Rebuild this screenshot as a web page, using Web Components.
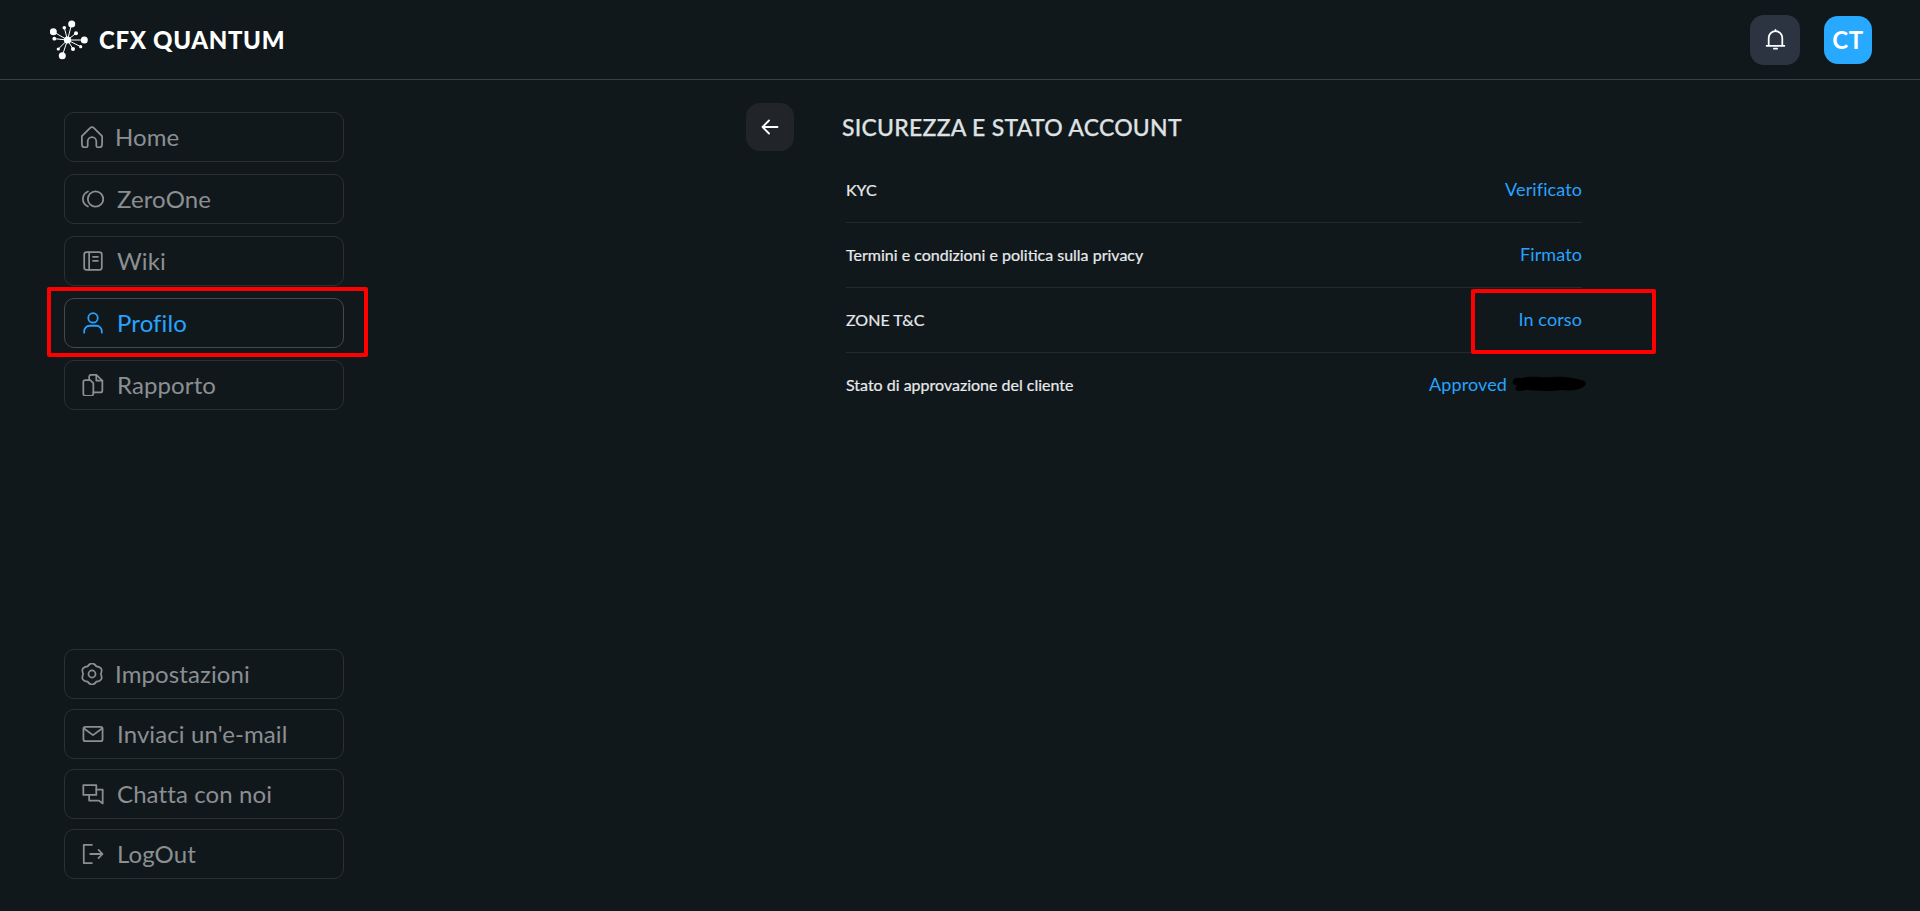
<!DOCTYPE html>
<html lang="it"><head><meta charset="utf-8"><title>CFX Quantum</title>
<style>
html,body{margin:0;height:911px;overflow:hidden;background:#11181c;font-family:"Lato","Noto Sans",sans-serif}
</style></head><body>
<cq-app>
  <cq-header slot="header"></cq-header>
  <cq-sidebar slot="side">
    <cq-nav slot="top" label="Home" icon="home"></cq-nav>
    <cq-nav slot="top" label="ZeroOne" icon="zero"></cq-nav>
    <cq-nav slot="top" label="Wiki" icon="wiki"></cq-nav>
    <cq-nav slot="top" label="Profilo" icon="user" active marked></cq-nav>
    <cq-nav slot="top" label="Rapporto" icon="report"></cq-nav>
    <cq-nav slot="bottom" label="Impostazioni" icon="gear"></cq-nav>
    <cq-nav slot="bottom" label="Inviaci un'e-mail" icon="mail"></cq-nav>
    <cq-nav slot="bottom" label="Chatta con noi" icon="chat"></cq-nav>
    <cq-nav slot="bottom" label="LogOut" icon="logout"></cq-nav>
  </cq-sidebar>
  <cq-panel slot="main" heading="SICUREZZA E STATO ACCOUNT">
    <cq-row label="KYC" value="Verificato"></cq-row>
    <cq-row label="Termini e condizioni e politica sulla privacy" value="Firmato"></cq-row>
    <cq-row label="ZONE T&amp;C" value="In corso" marked></cq-row>
    <cq-row label="Stato di approvazione del cliente" value="Approved" redacted last></cq-row>
  </cq-panel>
</cq-app>
<script>
const S='fill="none" stroke="currentColor" stroke-width="1.600" stroke-linecap="round" stroke-linejoin="round"';
const ICONS={
home:`<path d="M2.800 11.200 9.900 4.100a3 3 0 0 1 4.200 0l7.100 7.100V18.600a2.900 2.900 0 0 1-2.900 2.900h-.7a1.700 1.700 0 0 1-1.700-1.700V16a3.900 3.900 0 0 0-7.800 0v3.800a1.700 1.700 0 0 1-1.700 1.700h-.7a2.900 2.900 0 0 1-2.900-2.900z"/>`,
zero:`<circle cx="14.300" cy="12" r="7"/><path d="M7.400 5.200A7.600 7.600 0 0 0 2.800 12a7.600 7.600 0 0 0 4.600 6.800"/>`,
wiki:`<rect x="4" y="4" width="16" height="16" rx="2.200"/><path d="M8.500 4v16M12 8.200h4.500M12 11.800h4.500"/>`,
user:`<circle cx="12" cy="7.400" r="4.300"/><path d="M4 20.800v-1.300a5 5 0 0 1 5-5h6a5 5 0 0 1 5 5v1.300"/>`,
report:`<path d="M9.500 7.500H5a1.800 1.800 0 0 0-1.800 1.800V20A1.800 1.800 0 0 0 5 21.800h5.500a1.800 1.800 0 0 0 1.800-1.800V10.300z"/><path d="M8.500 7.500V4.500a1.800 1.800 0 0 1 1.800-1.800H15l5.500 5.300V17a1.800 1.800 0 0 1-1.800 1.800h-6.400"/><path d="M15 2.700V8h5.500"/>`,
gear:`<path d="M8 5.070Q12-.4 16 5.070 22.740 5.800 20 12 22.740 18.200 16 18.930 12 24.400 8 18.930 1.260 18.200 4 12 1.260 5.800 8 5.070z"/><circle cx="12" cy="12" r="3.200"/>`,
mail:`<rect x="3.300" y="5.500" width="17.400" height="13" rx="1.800"/><path d="m3.800 7 8.200 6 8.200-6"/>`,
chat:`<path d="M3.200 4h11.800v8.800H6.800L3.200 12.800z"/><path d="M15 8h5.800v12.600l-3.400-2.600H8.500v-5"/>`,
logout:`<path d="M11 3.800H3.600v16.400H11"/><path d="M9.500 12h11M17 8.300l3.700 3.700-3.700 3.700"/>`
};
class CqBase extends HTMLElement{
  constructor(){super();this.attachShadow({mode:'open'});}
  render(h){this.shadowRoot.innerHTML=h;}
}
class CqApp extends CqBase{connectedCallback(){this.render(`<style>
:host{display:grid;grid-template-columns:400px 1fr;grid-template-rows:80px 831px;height:911px;color:#e6e8ea}
.h{grid-column:1/3}
</style><div class="h"><slot name="header"></slot></div><slot name="side"></slot><slot name="main"></slot>`);}}
class CqHeader extends CqBase{connectedCallback(){this.render(`<style>
:host{display:flex;align-items:center;box-sizing:border-box;height:80px;padding:0 48px 0 50px;border-bottom:1px solid #3a3f43;font-family:"Lato",sans-serif}
.logo{display:flex;align-items:center;gap:11px;flex:1}
.logo b{font-size:24px;font-weight:900;color:#fff;letter-spacing:.65px;line-height:1}
.bell{width:50px;height:50px;border-radius:14px;background:#2b3440;display:flex;align-items:center;justify-content:center;color:#fff}
.av{width:48px;height:48px;border-radius:14px;background:#27a9ff;color:#fff;font-size:24px;font-weight:700;display:flex;align-items:center;justify-content:center;margin-left:24px;letter-spacing:.5px}
</style>
<div class="logo">
<svg width="38" height="40" viewBox="50 20 38 40" fill="#fff" stroke="#fff" stroke-width="1">
<path d="M67.500 40 71.700 24M67.500 40 53.300 31.700M67.500 40H84.300M67.500 40 62.300 55.700M67.500 40 64.300 27.700M67.500 40 76 33.300M67.500 40 54.300 38.700M67.500 40 80.700 46.700M67.500 40 58.300 49M67.500 40 73 49"/>
<g stroke="none"><circle cx="67.500" cy="40" r="3.600"/><circle cx="71.700" cy="24" r="3.500"/><circle cx="53.300" cy="31.700" r="3.500"/><circle cx="84.300" cy="40" r="3.500"/><circle cx="62.300" cy="55.700" r="3.500"/><circle cx="64.300" cy="27.700" r="1.800"/><circle cx="76" cy="33.300" r="2"/><circle cx="54.300" cy="38.700" r="1.900"/><circle cx="80.700" cy="46.700" r="1.600"/><circle cx="58.300" cy="49" r="1.600"/><circle cx="73" cy="49" r="2"/></g></svg>
<b>CFX QUANTUM</b></div>
<div class="bell"><svg width="21" height="23" viewBox="0 0 20 22" fill="none" stroke="currentColor" stroke-width="1.700" stroke-linecap="round" stroke-linejoin="round"><path d="M1.500 17h17M3.500 17V9.500a6.500 6.500 0 0 1 13 0V17M10 3V1.800M8.500 19.800h3"/></svg></div>
<div class="av">CT</div>`);}}
class CqSidebar extends CqBase{connectedCallback(){this.render(`<style>
:host{display:flex;flex-direction:column;justify-content:space-between;box-sizing:border-box;height:831px;padding:32px 0 32px 64px}
.t,.b{display:flex;flex-direction:column}.t{gap:12px}.b{gap:10px}
</style><div class="t"><slot name="top"></slot></div><div class="b"><slot name="bottom"></slot></div>`);}}
class CqNav extends CqBase{connectedCallback(){
const a=this.hasAttribute('active');
const ic=this.getAttribute('icon');
const tight=ic==='gear'||ic==='home';
this.render(`<style>
:host{display:flex;position:relative;box-sizing:border-box;width:280px;height:50px;border:1px solid ${a?'#44494d':'#2a3034'};border-radius:10px;align-items:center;padding-left:${tight?16:17}px;color:${a?'#27a3ff':'#8b8f92'};font-size:24px;font-family:"Lato",sans-serif}
svg{flex:none;margin-right:${tight?12:13}px}
span{letter-spacing:.1px;line-height:1}
.mark{position:absolute;left:-18px;top:-12px;width:321px;height:70px;box-sizing:border-box;border:4px solid #f00;border-radius:2px}
</style><svg width="22" height="22" viewBox="2 2 20 20" ${S}>${ICONS[ic]}</svg><span>${this.getAttribute('label')}</span>${this.hasAttribute('marked')?'<div class="mark"></div>':''}`);}}
class CqPanel extends CqBase{connectedCallback(){this.render(`<style>
:host{display:flex;gap:49px;box-sizing:border-box;padding:23px 0 0 346px;align-items:flex-start}
.back{width:48px;height:48px;border-radius:14px;background:#212529;display:flex;align-items:center;justify-content:center;color:#fff;flex:none}
.c{width:739px}
h1{margin:0 0 0 -1px;height:48px;line-height:48px;font-size:23px;font-weight:500;color:#dfe1e3;letter-spacing:.25px;font-family:"Lato",sans-serif;-webkit-text-stroke:.25px #dfe1e3}
.rows{margin:7px 0 0 3px;width:736px;display:flex;flex-direction:column}
</style><div class="back"><svg width="18" height="18" viewBox="0 0 18 18" fill="none" stroke="currentColor" stroke-width="1.800" stroke-linecap="round" stroke-linejoin="round"><path d="M16.500 9h-15M8 2.500 1.500 9 8 15.500"/></svg></div>
<div class="c"><h1>${this.getAttribute('heading')}</h1><div class="rows"><slot></slot></div></div>`);}}
class CqRow extends CqBase{connectedCallback(){
const last=this.hasAttribute('last');
const lab=this.getAttribute('label').replace(/&/g,'&amp;');
this.render(`<style>
:host{display:flex;position:relative;box-sizing:border-box;height:65px;align-items:center;justify-content:space-between;${last?'':'border-bottom:1px solid #23292d;'}font-family:"Lato",sans-serif;font-size:16px;color:#e8eaec;padding-bottom:${last?3:2}px}
.l{-webkit-text-stroke:.2px #e8eaec}
.v{color:#27a3ff;font-size:18px;letter-spacing:.1px}
.mark{position:absolute;left:625px;right:-74px;top:1px;height:65px;box-sizing:border-box;border:4px solid #f00;border-radius:2px}
.red{position:absolute;right:-5px;top:22px}
.pad{margin-right:75px}
</style><span class="l">${lab}</span><span class="v ${this.hasAttribute('redacted')?'pad':''}">${this.getAttribute('value')}</span>${this.hasAttribute('marked')?'<div class="mark"></div>':''}${this.hasAttribute('redacted')?'<svg class="red" width="76" height="18" viewBox="0 0 76 18"><path fill="#000" d="M2 6C3 2 8 3 12 3 20 0 30 3 42 2 52 1 64 3 70 5 76 6 76 10 72 12 68 15 60 16 50 15 38 17 24 15 16 15 12 15 8 17 5 15 3 13 7 11 5 10 2 10 1 8 2 6z"/></svg>':''}`);}}
customElements.define('cq-app',CqApp);
customElements.define('cq-header',CqHeader);
customElements.define('cq-sidebar',CqSidebar);
customElements.define('cq-nav',CqNav);
customElements.define('cq-panel',CqPanel);
customElements.define('cq-row',CqRow);
</script>
</body></html>
